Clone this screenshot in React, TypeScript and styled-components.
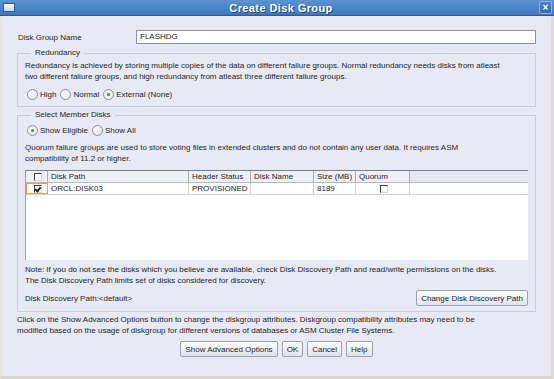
import * as React from 'react';
import styled, { createGlobalStyle } from 'styled-components';

const GlobalStyle = createGlobalStyle`
  html, body {
    margin: 0;
    padding: 0;
    background: #e7eaf4;
  }
  body {
    font-family: "Liberation Sans", Arial, sans-serif;
    font-size: 8px;
    color: #1e1e1e;
  }
`;

const Window = styled.div`
  width: 554px;
  height: 379px;
  display: flex;
  flex-direction: column;
  background: #e7eaf4;
  overflow: hidden;
`;

const TitleBar = styled.div`
  height: 15px;
  flex: none;
  display: flex;
  align-items: center;
  padding: 0 2px 0 3px;
  background: linear-gradient(#5d93d4, #4a84c9 50%, #3f78c0);
  border-bottom: 1px solid #2b5a98;
`;

const WindowIcon = styled.span`
  width: 10px;
  height: 7px;
  border: 1px solid #2f5f9c;
  background: linear-gradient(#f4f5f8, #cfd4dc);
  box-shadow: inset 0 1px 0 #fff;
`;

const Title = styled.div`
  flex: 1;
  text-align: center;
  color: #fff;
  font-weight: bold;
  font-size: 11px;
  letter-spacing: 0.4px;
  text-shadow: 1px 1px 0 #1f4a82;
  padding-left: 8px;
`;

const CloseButton = styled.span`
  width: 11px;
  height: 11px;
  border: 1px solid #8fb3e0;
  border-radius: 2px;
  background: linear-gradient(#4d83c6, #3569ad);
  color: #fff;
  font-weight: bold;
  font-size: 10px;
  line-height: 11px;
  text-align: center;
`;

const Body = styled.div`
  flex: 1;
  display: flex;
  flex-direction: column;
  border-left: 2px solid #ebe3d6;
  border-right: 3px solid #e2dccd;
  border-bottom: 3px solid #ddd6c6;
  padding: 14px 15px 0 15px;
`;

const NameRow = styled.div`
  display: flex;
  align-items: center;
  height: 14px;
`;

const NameLabel = styled.span`
  width: 118px;
  padding-left: 1px;
`;

const TextInput = styled.div`
  flex: 1;
  height: 12px;
  line-height: 12px;
  border: 1px solid #8e949e;
  background: #fff;
  padding-left: 3px;
`;

const Group = styled.fieldset<{ $top: number; $bottom: number }>`
  margin: ${(p) => p.$top}px 0 0 0;
  padding: 1px 7px ${(p) => p.$bottom}px 7px;
  border: 1px solid #c9ced8;
  min-width: 0;
`;

const Legend = styled.legend`
  margin-left: 6px;
  padding: 0 4px;
  line-height: 10px;
`;

const Para = styled.div<{ $top?: number }>`
  line-height: 11px;
  white-space: nowrap;
  margin-top: ${(p) => p.$top || 0}px;
`;

const RadioRow = styled.div<{ $top?: number }>`
  display: flex;
  align-items: center;
  gap: 4px;
  height: 12px;
  margin-top: ${(p) => p.$top || 0}px;
  padding-left: 2px;
`;

const RadioItem = styled.label`
  display: flex;
  align-items: center;
  gap: 2px;
`;

const RadioCircle = styled.span<{ $on?: boolean }>`
  width: 9px;
  height: 9px;
  border-radius: 50%;
  border: 1px solid #8b919c;
  background: radial-gradient(circle at 40% 35%, #ffffff, #dfe3ea);
  display: flex;
  align-items: center;
  justify-content: center;
  &::after {
    content: '';
    display: ${(p) => (p.$on ? 'block' : 'none')};
    width: 3px;
    height: 3px;
    border-radius: 50%;
    background: #3aa33a;
    box-shadow: 0 0 1px #5c5;
  }
`;

const Table = styled.div`
  margin-top: 6px;
  height: 89px;
  background: #fff;
  border-left: 1px solid #9a9ea6;
  border-top: 1px solid #7b7f87;
  display: flex;
  flex-direction: column;
`;

const HeaderRow = styled.div`
  display: flex;
  height: 11px;
  background: #e4e8f1;
  border-bottom: 1px solid #b4b8c0;
`;

const DataRow = styled.div`
  display: flex;
  height: 11px;
  border-bottom: 1px solid #cfd2d8;
`;

const Cell = styled.div<{ $w: number; $center?: boolean; $head?: boolean; $focus?: boolean }>`
  width: ${(p) => p.$w}px;
  flex: none;
  box-sizing: border-box;
  line-height: 11px;
  padding-left: 3px;
  display: flex;
  align-items: center;
  justify-content: ${(p) => (p.$center ? 'center' : 'flex-start')};
  background: ${(p) => (p.$head ? '#eef0f5' : '#fff')};
  border-right: 1px solid ${(p) => (p.$head ? '#a9adb5' : '#cfd2d8')};
  outline: ${(p) => (p.$focus ? '1px solid #e3a54a' : 'none')};
  outline-offset: -1px;
`;

const Check = styled.span<{ $on?: boolean }>`
  width: 8px;
  height: 8px;
  box-sizing: border-box;
  border-top: 1px solid #3c3c3c;
  border-left: 1px solid #3c3c3c;
  border-right: 1px solid #d8d8d8;
  border-bottom: 1px solid #d8d8d8;
  background: #fff;
  position: relative;
  &::after {
    content: '';
    display: ${(p) => (p.$on ? 'block' : 'none')};
    position: absolute;
    left: 1px;
    top: 0px;
    width: 2px;
    height: 4px;
    border-right: 2px solid #222;
    border-bottom: 2px solid #222;
    transform: rotate(40deg);
  }
`;

const PathRow = styled.div`
  display: flex;
  align-items: center;
  justify-content: space-between;
  margin-top: 4px;
`;

const Button = styled.button`
  height: 16px;
  font-family: "Liberation Sans", Arial, sans-serif;
  font-size: 8px;
  color: #1e1e1e;
  padding: 0 4px;
  border: 1px solid #9ba1ab;
  border-radius: 2px;
  background: linear-gradient(#ffffff, #eceef2 60%, #dfe2e8);
  box-shadow: inset 0 1px 0 #fff;
`;

const ButtonBar = styled.div`
  display: flex;
  justify-content: center;
  gap: 4px;
  margin-top: 5px;
`;

const columns = [
  { w: 22, label: '' },
  { w: 141, label: 'Disk Path' },
  { w: 62, label: 'Header Status' },
  { w: 63, label: 'Disk Name' },
  { w: 42, label: 'Size (MB)' },
  { w: 54, label: 'Quorum' },
];

export default function App() {
  return (
    <Window>
      <GlobalStyle />
      <TitleBar>
        <WindowIcon />
        <Title>Create Disk Group</Title>
        <CloseButton>×</CloseButton>
      </TitleBar>
      <Body>
        <NameRow>
          <NameLabel>Disk Group Name</NameLabel>
          <TextInput>FLASHDG</TextInput>
        </NameRow>

        <Group $top={4} $bottom={6}>
          <Legend>Redundancy</Legend>
          <Para $top={1}>
            Redundancy is achieved by storing multiple copies of the data on different failure groups. Normal redundancy needs disks from atleast
            <br />
            two different failure groups, and high redundancy from atleast three different failure groups.
          </Para>
          <RadioRow $top={6}>
            <RadioItem><RadioCircle />High</RadioItem>
            <RadioItem><RadioCircle />Normal</RadioItem>
            <RadioItem><RadioCircle $on />External (None)</RadioItem>
          </RadioRow>
        </Group>

        <Group $top={3} $bottom={5}>
          <Legend>Select Member Disks</Legend>
          <RadioRow $top={3}>
            <RadioItem><RadioCircle $on />Show Eligible</RadioItem>
            <RadioItem><RadioCircle />Show All</RadioItem>
          </RadioRow>
          <Para $top={6}>
            Quorum failure groups are used to store voting files in extended clusters and do not contain any user data. It requires ASM
            <br />
            compatibility of 11.2 or higher.
          </Para>
          <Table>
            <HeaderRow>
              {columns.map((c, i) => (
                <Cell key={i} $w={c.w} $head $center={i === 0}>
                  {i === 0 ? <Check /> : c.label}
                </Cell>
              ))}
            </HeaderRow>
            <DataRow>
              <Cell $w={22} $center $focus><Check $on /></Cell>
              <Cell $w={141}>ORCL:DISK03</Cell>
              <Cell $w={62}>PROVISIONED</Cell>
              <Cell $w={63} />
              <Cell $w={42}>8189</Cell>
              <Cell $w={54} $center><Check /></Cell>
            </DataRow>
          </Table>
          <Para $top={4}>
            Note: If you do not see the disks which you believe are available, check Disk Discovery Path and read/write permissions on the disks.
            <br />
            The Disk Discovery Path limits set of disks considered for discovery.
          </Para>
          <PathRow>
            <span>Disk Discovery Path:&lt;default&gt;</span>
            <Button>Change Disk Discovery Path</Button>
          </PathRow>
        </Group>

        <Para $top={2}>
          Click on the Show Advanced Options button to change the diskgroup attributes. Diskgroup compatibility attributes may need to be
          <br />
          modified based on the usage of diskgroup for different versions of databases or ASM Cluster File Systems.
        </Para>
        <ButtonBar>
          <Button>Show Advanced Options</Button>
          <Button>OK</Button>
          <Button>Cancel</Button>
          <Button>Help</Button>
        </ButtonBar>
      </Body>
    </Window>
  );
}
